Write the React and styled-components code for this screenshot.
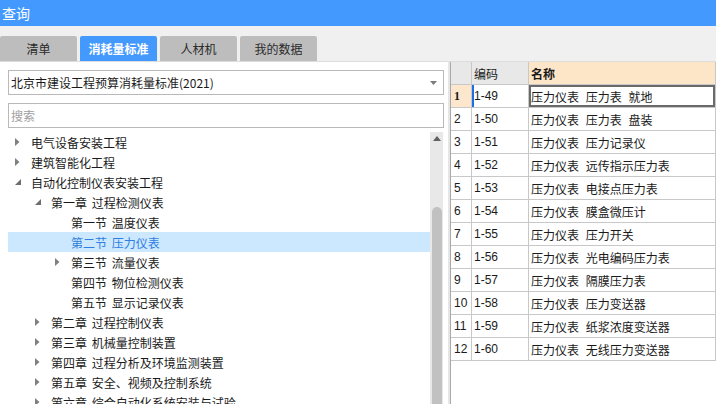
import React from 'react';
import styled, { createGlobalStyle } from 'styled-components';

const GlobalStyle = createGlobalStyle`
  html, body {
    margin: 0;
    padding: 0;
    background: #ffffff;
  }
  body {
    font-family: "Noto Sans CJK SC", "Microsoft YaHei", sans-serif;
    font-size: 12px;
    color: #1a1a1a;
  }
`;

const tabs = ['清单', '消耗量标准', '人材机', '我的数据'];

const treeItems = [
  { level: 0, label: '电气设备安装工程', state: 'closed' },
  { level: 0, label: '建筑智能化工程', state: 'closed' },
  { level: 0, label: '自动化控制仪表安装工程', state: 'open' },
  { level: 1, label: '第一章 过程检测仪表', state: 'open' },
  { level: 2, label: '第一节 温度仪表', state: 'leaf' },
  { level: 2, label: '第二节 压力仪表', state: 'leaf', selected: true },
  { level: 2, label: '第三节 流量仪表', state: 'closed' },
  { level: 2, label: '第四节 物位检测仪表', state: 'leaf' },
  { level: 2, label: '第五节 显示记录仪表', state: 'leaf' },
  { level: 1, label: '第二章 过程控制仪表', state: 'closed' },
  { level: 1, label: '第三章 机械量控制装置', state: 'closed' },
  { level: 1, label: '第四章 过程分析及环境监测装置', state: 'closed' },
  { level: 1, label: '第五章 安全、视频及控制系统', state: 'closed' },
  { level: 1, label: '第六章 综合自动化系统安装与试验', state: 'closed' },
];

const rows = [
  ['1-49', '压力仪表 压力表 就地'],
  ['1-50', '压力仪表 压力表 盘装'],
  ['1-51', '压力仪表 压力记录仪'],
  ['1-52', '压力仪表 远传指示压力表'],
  ['1-53', '压力仪表 电接点压力表'],
  ['1-54', '压力仪表 膜盒微压计'],
  ['1-55', '压力仪表 压力开关'],
  ['1-56', '压力仪表 光电编码压力表'],
  ['1-57', '压力仪表 隔膜压力表'],
  ['1-58', '压力仪表 压力变送器'],
  ['1-59', '压力仪表 纸浆浓度变送器'],
  ['1-60', '压力仪表 无线压力变送器'],
];

const Arrow = ({ state }) => {
  if (state === 'open') {
    return (
      <svg width="7" height="7" viewBox="0 0 7 7">
        <polygon points="6,0 6,6 0,6" fill="#6e6e6e" />
      </svg>
    );
  }
  if (state === 'closed') {
    return (
      <svg width="5" height="8" viewBox="0 0 5 8">
        <polygon points="0,0 4.5,4 0,8" fill="#808080" />
      </svg>
    );
  }
  return null;
};

function App() {
  return (
    <Window>
      <GlobalStyle />
      <TitleBar>查询</TitleBar>
      <TabStrip>
        {tabs.map((t, i) => (
          <Tab key={t} active={i === 1}>{t}</Tab>
        ))}
      </TabStrip>
      <Body>
        <LeftPanel>
          <ComboBox>
            <span>北京市建设工程预算消耗量标准(2021)</span>
            <svg width="7" height="4" viewBox="0 0 7 4">
              <polygon points="0,0 7,0 3.5,4" fill="#7a7a7a" />
            </svg>
          </ComboBox>
          <SearchBox>搜索</SearchBox>
          <TreeArea>
            <TreeList>
              {treeItems.map((item) => (
                <TreeRow key={item.label} level={item.level} selected={item.selected}>
                  <Toggle><Arrow state={item.state} /></Toggle>
                  {item.label}
                </TreeRow>
              ))}
            </TreeList>
            <ScrollBar>
              <ScrollUp>
                <svg width="8" height="5" viewBox="0 0 8 5">
                  <polygon points="0,5 8,5 4,0" fill="#606060" />
                </svg>
              </ScrollUp>
              <ScrollThumb />
            </ScrollBar>
          </TreeArea>
        </LeftPanel>
        <Splitter />
        <RightPanel>
          <GridRow>
            <HeadCell />
            <HeadCell>编码</HeadCell>
            <HeadCell accent>名称</HeadCell>
          </GridRow>
          {rows.map(([code, name], i) => (
            <GridRow key={code}>
              <NumCell current={i === 0}>{i + 1}</NumCell>
              <CodeCell current={i === 0}>{code}</CodeCell>
              <NameCell current={i === 0}>{name}</NameCell>
            </GridRow>
          ))}
        </RightPanel>
      </Body>
    </Window>
  );
}

const Window = styled.div`
  width: 716px;
  height: 404px;
  overflow: hidden;
  display: flex;
  flex-direction: column;
  background: #ffffff;
`;

const TitleBar = styled.div`
  height: 26px;
  flex-shrink: 0;
  background: #4499ff;
  color: #ffffff;
  font-size: 14px;
  line-height: 26px;
  padding-left: 2px;
`;

const TabStrip = styled.div`
  height: 36px;
  flex-shrink: 0;
  box-sizing: border-box;
  background: #f0f0f0;
  border-bottom: 1px solid #dcdcdc;
  display: flex;
  align-items: flex-end;
  gap: 2px;
`;

const Tab = styled.div`
  width: 77px;
  height: 25px;
  margin-right: 1px;
  border-radius: 2px 2px 0 0;
  background: ${(p) => (p.active ? '#4499ff' : '#bdbdbd')};
  color: ${(p) => (p.active ? '#ffffff' : '#2a2a2a')};
  font-weight: ${(p) => (p.active ? 700 : 400)};
  font-size: 12px;
  display: flex;
  align-items: center;
  justify-content: center;
`;

const Body = styled.div`
  flex: 1;
  display: flex;
  min-height: 0;
`;

const LeftPanel = styled.div`
  width: 448px;
  flex-shrink: 0;
  box-sizing: border-box;
  padding: 8px 4px 0 8px;
  display: flex;
  flex-direction: column;
  gap: 8px;
`;

const ComboBox = styled.div`
  height: 25px;
  box-sizing: border-box;
  border: 1px solid #b9b9b9;
  display: flex;
  align-items: center;
  justify-content: space-between;
  padding: 0 6px 0 2px;
  font-size: 12px;
  color: #1a1a1a;
`;

const SearchBox = styled.div`
  height: 25px;
  box-sizing: border-box;
  border: 1px solid #b9b9b9;
  display: flex;
  align-items: center;
  padding-left: 2px;
  color: #a0a0a0;
  font-size: 12px;
`;

const TreeArea = styled.div`
  flex: 1;
  display: flex;
  margin-top: -4px;
  min-height: 0;
  overflow: hidden;
`;

const TreeList = styled.div`
  width: 422px;
  flex-shrink: 0;
`;

const TreeRow = styled.div`
  height: 20px;
  display: flex;
  align-items: center;
  padding-left: ${(p) => 6 + p.level * 20}px;
  background: ${(p) => (p.selected ? '#cce8ff' : 'transparent')};
  color: ${(p) => (p.selected ? '#2f7de1' : '#1a1a1a')};
  font-size: 12px;
  word-spacing: 2px;
  white-space: pre;
`;

const Toggle = styled.span`
  width: 17px;
  height: 20px;
  flex-shrink: 0;
  display: flex;
  align-items: center;
  padding-left: 1px;
  box-sizing: border-box;
`;

const ScrollBar = styled.div`
  width: 13px;
  background: #e8e8e8;
  display: flex;
  flex-direction: column;
  align-items: center;
`;

const ScrollUp = styled.div`
  height: 12px;
  display: flex;
  align-items: center;
  justify-content: center;
  margin-bottom: 63px;
`;

const ScrollThumb = styled.div`
  width: 10px;
  flex: 1;
  background: #c1c1c1;
  border-radius: 5px 5px 0 0;
`;

const Splitter = styled.div`
  width: 2px;
  flex-shrink: 0;
  background: #e6e6e6;
`;

const RightPanel = styled.div`
  flex: 1;
  border-left: 1px solid #a9a9a9;
  background: #ffffff;
  font-size: 12px;
`;

const GridRow = styled.div`
  display: grid;
  grid-template-columns: 21px 57px 1fr;
  height: 23px;
`;

const Cell = styled.div`
  box-sizing: border-box;
  border-right: 1px solid #c8c8c8;
  border-bottom: 1px solid #c8c8c8;
  display: flex;
  align-items: center;
  padding-left: 2px;
  white-space: pre;
  overflow: hidden;
`;

const HeadCell = styled(Cell)`
  background: ${(p) => (p.accent ? '#fde5c8' : '#e8e8e8')};
  font-weight: ${(p) => (p.accent ? 700 : 400)};
  color: #1a1a1a;
`;

const NumCell = styled(Cell)`
  background: ${(p) => (p.current ? '#fde7cc' : '#ffffff')};
  font-weight: ${(p) => (p.current ? 700 : 400)};
  font-family: ${(p) => (p.current ? '"Liberation Serif", serif' : '"Liberation Sans", sans-serif')};
  font-size: 12px;
  padding-left: 3px;
`;

const CodeCell = styled(Cell)`
  font-family: "Liberation Sans", sans-serif;
  box-shadow: ${(p) => (p.current ? 'inset 2px 0 0 #1a6fe8' : 'none')};
`;

const NameCell = styled(Cell)`
  word-spacing: 4px;
  box-shadow: ${(p) => (p.current ? 'inset 0 0 0 2px #6a6a6a' : 'none')};
`;

export default App;
